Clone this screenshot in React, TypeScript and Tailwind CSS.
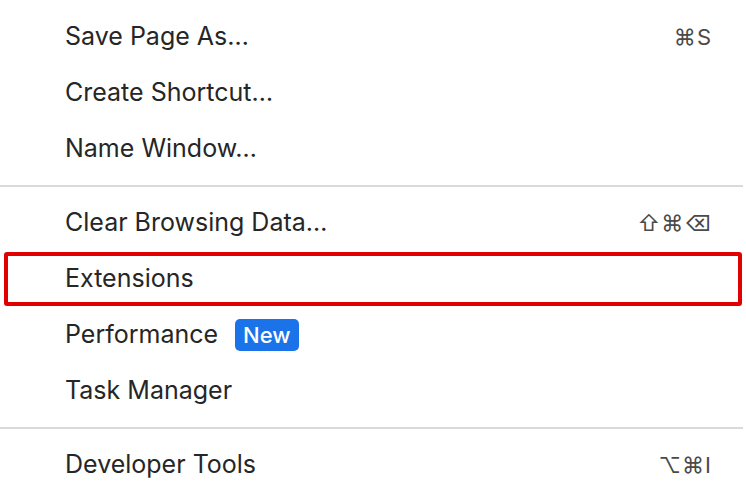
import React from "react";

type Item = { label: string; shortcut?: string; badge?: string; highlight?: boolean };

const groups: Item[][] = [
  [
    { label: "Save Page As…", shortcut: "⌘S" },
    { label: "Create Shortcut…" },
    { label: "Name Window…" },
  ],
  [
    { label: "Clear Browsing Data…", shortcut: "⇧⌘⌫" },
    { label: "Extensions", highlight: true },
    { label: "Performance", badge: "New" },
    { label: "Task Manager" },
  ],
  [{ label: "Developer Tools", shortcut: "⌥⌘I" }],
];

function Row({ item }: { item: Item }) {
  return (
    <div className="relative flex h-[56px] items-center justify-between pl-[65px] pr-[34px]">
      <div className="flex items-center gap-[17px]">
        <span className="text-[25px] text-[#262626]">{item.label}</span>
        {item.badge && (
          <span className="rounded-[5px] bg-[#1a73e8] px-[8px] h-[32px] flex items-center text-[22px] font-medium text-white">
            {item.badge}
          </span>
        )}
      </div>
      {item.shortcut && (
        <span className="text-[22px] text-[#4a4a4a] tracking-[1px]" style={{ fontFamily: "Inter, 'DejaVu Sans', sans-serif" }}>
          {item.shortcut}
        </span>
      )}
      {item.highlight && (
        <div className="pointer-events-none absolute left-[4px] right-[4px] top-[1px] bottom-[1px] rounded-[3px] border-[4px] border-[#e00000]" />
      )}
    </div>
  );
}

export default function App() {
  return (
    <div className="h-[500px] w-[746px] bg-white pt-[9px]" style={{ fontFamily: "Inter, 'Noto Sans', sans-serif" }}>
      {groups.map((g, i) => (
        <div key={i}>
          {i > 0 && (
            <div className="flex h-[18px] items-center pr-[3px]">
              <div className="h-[2px] w-full bg-[#dadada]" />
            </div>
          )}
          {g.map(item => <Row key={item.label} item={item} />)}
        </div>
      ))}
    </div>
  );
}
